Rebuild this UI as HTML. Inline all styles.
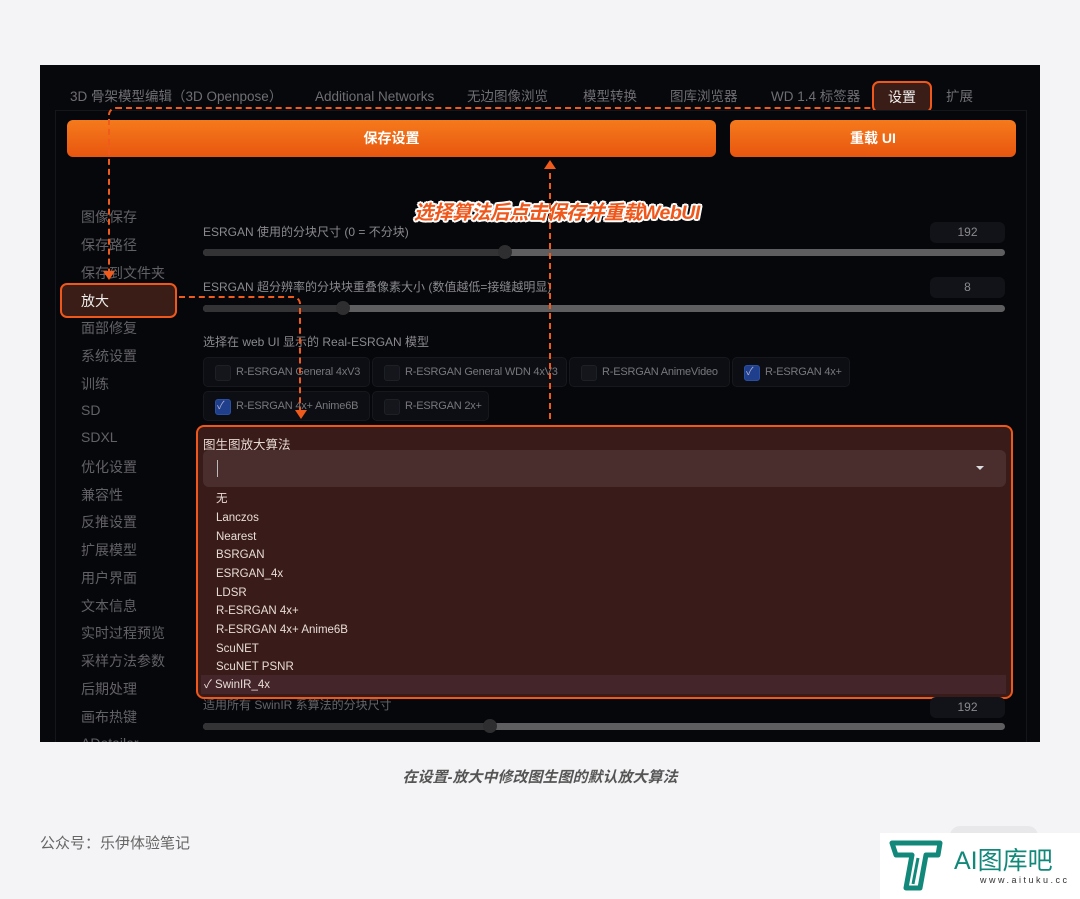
<!DOCTYPE html>
<html><head><meta charset="utf-8"><style>
*{margin:0;padding:0;box-sizing:border-box}
body{width:1080px;height:899px;background:#f4f4f6;position:relative;overflow:hidden;font-family:"Liberation Sans","Noto Sans CJK SC",sans-serif}
.a{position:absolute}
.shot{left:40px;top:65px;width:1000px;height:677px;background:#07080c;overflow:hidden}
.tab{position:absolute;top:24px;font-size:13.5px;line-height:16px;color:#6f6f73;white-space:nowrap}
.side{position:absolute;left:41px;font-size:14px;color:#626266}
.btn{position:absolute;top:55px;height:37px;border-radius:6px;background:linear-gradient(180deg,#f57a1c,#e8560f);color:#fff;font-weight:bold;font-size:14px;text-align:center;line-height:37px}
.lbl{position:absolute;left:163px;font-size:12px;color:#8a8a8e;white-space:nowrap}
.track{position:absolute;left:163px;width:802px;height:7px;border-radius:4px;background:#5e5e60}
.track i{position:absolute;left:0;top:0;height:7px;border-radius:4px;background:#333336}
.thumb{position:absolute;width:14px;height:14px;border-radius:50%;background:#2e2e30;top:-4px}
.num{position:absolute;left:890px;width:75px;height:21px;border-radius:6px;background:#111318;color:#8a8a8e;font-size:12px;text-align:center;line-height:21px}
.cb{position:absolute;height:30px;border:1px solid #16181e;background:#0c0e13;border-radius:5px;font-size:11px;letter-spacing:-0.2px;color:#77777c;line-height:28px;padding-left:32px;white-space:nowrap;overflow:hidden}
.cb:before{content:"";position:absolute;left:11px;top:7px;width:14px;height:14px;border-radius:3px;background:#14161c;border:1px solid #1e2027}
.cb.on:before{background:#1f3f8c;border-color:#2a4ea0}
.cb.on:after{content:"✓";position:absolute;left:13px;top:0;color:#aac;font-size:11px}
.opt{position:absolute;left:18px;font-size:11.5px;line-height:14px;color:#e8dcd6;white-space:nowrap}
.dash{position:absolute;border-color:#f05a1a;border-style:dashed;border-width:0}
</style></head><body>
<div class="a shot">
 <div class="tab" style="left:30px">3D 骨架模型编辑（3D Openpose）</div>
 <div class="tab" style="left:275px">Additional Networks</div>
 <div class="tab" style="left:427px">无边图像浏览</div>
 <div class="tab" style="left:543px">模型转换</div>
 <div class="tab" style="left:630px">图库浏览器</div>
 <div class="tab" style="left:731px">WD 1.4 标签器</div>
 <div class="a" style="left:832px;top:16px;width:60px;height:32px;border:2px solid #f0571b;border-radius:7px;background:#3a1d17;color:#eee;font-size:14px;text-align:center;line-height:28px">设置</div>
 <div class="tab" style="left:906px">扩展</div>
 <div class="a" style="left:15px;top:45px;width:972px;height:640px;border:1px solid #14161c;background:#06070b"></div>
 <div class="btn" style="left:27px;width:649px">保存设置</div>
 <div class="btn" style="left:690px;width:286px">重载 UI</div>
 <div class="a" style="left:374px;top:131px;font-size:19.5px;font-weight:bold;font-style:italic;color:#f0571b;text-shadow:2px 0 #fff,-2px 0 #fff,0 2px #fff,0 -2px #fff,1.5px 1.5px #fff,-1.5px -1.5px #fff,1.5px -1.5px #fff,-1.5px 1.5px #fff;white-space:nowrap;letter-spacing:-0.5px">选择算法后点击保存并重载WebUI</div>
 <div class="side" style="top:142px">图像保存</div>
 <div class="side" style="top:170px">保存路径</div>
 <div class="side" style="top:198px">保存到文件夹</div>
 <div class="a" style="left:20px;top:218px;width:117px;height:35px;border:2px solid #f0571b;border-radius:7px;background:#3a1d17;color:#eee;font-size:14px;padding:6px 0 0 19px">放大</div>
 <div class="side" style="top:253px">面部修复</div>
 <div class="side" style="top:281px">系统设置</div>
 <div class="side" style="top:309px">训练</div>
 <div class="side" style="top:337px">SD</div>
 <div class="side" style="top:364px">SDXL</div>
 <div class="side" style="top:392px">优化设置</div>
 <div class="side" style="top:420px">兼容性</div>
 <div class="side" style="top:447px">反推设置</div>
 <div class="side" style="top:475px">扩展模型</div>
 <div class="side" style="top:503px">用户界面</div>
 <div class="side" style="top:531px">文本信息</div>
 <div class="side" style="top:558px">实时过程预览</div>
 <div class="side" style="top:586px">采样方法参数</div>
 <div class="side" style="top:614px">后期处理</div>
 <div class="side" style="top:642px">画布热键</div>
 <div class="side" style="top:670px">ADetailer</div>
 <div class="lbl" style="top:158px">ESRGAN 使用的分块尺寸 (0 = 不分块)</div>
 <div class="num" style="top:157px">192</div>
 <div class="track" style="top:184px"><i style="width:302px"></i><div class="thumb" style="left:295px"></div></div>
 <div class="lbl" style="top:213px">ESRGAN 超分辨率的分块块重叠像素大小 (数值越低=接缝越明显)</div>
 <div class="num" style="top:212px">8</div>
 <div class="track" style="top:240px"><i style="width:140px"></i><div class="thumb" style="left:133px"></div></div>
 <div class="lbl" style="top:268px">选择在 web UI 显示的 Real-ESRGAN 模型</div>
 <div class="cb" style="left:163px;top:292px;width:167px">R-ESRGAN General 4xV3</div>
 <div class="cb" style="left:332px;top:292px;width:195px">R-ESRGAN General WDN 4xV3</div>
 <div class="cb" style="left:529px;top:292px;width:161px">R-ESRGAN AnimeVideo</div>
 <div class="cb on" style="left:692px;top:292px;width:118px">R-ESRGAN 4x+</div>
 <div class="cb on" style="left:163px;top:326px;width:167px">R-ESRGAN 4x+ Anime6B</div>
 <div class="cb" style="left:332px;top:326px;width:117px">R-ESRGAN 2x+</div>
 <div class="a" style="left:156px;top:360px;width:817px;height:274px;border:2px solid #f0571b;border-radius:8px;background:#391c1a">
  <div class="a" style="left:5px;top:7px;font-size:12.5px;color:#e6d8d2">图生图放大算法</div>
  <div class="a" style="left:5px;top:23px;width:803px;height:37px;border-radius:6px;background:#4a2e2e">
   <div class="a" style="left:14px;top:10px;width:1px;height:17px;background:#bbb"></div>
   <div class="a" style="right:22px;top:16px;border:4px solid transparent;border-top:4px solid #ddd"></div>
  </div>
  <div class="opt" style="top:65px">无</div>
  <div class="opt" style="top:84px">Lanczos</div>
  <div class="opt" style="top:103px">Nearest</div>
  <div class="opt" style="top:121px">BSRGAN</div>
  <div class="opt" style="top:140px">ESRGAN_4x</div>
  <div class="opt" style="top:159px">LDSR</div>
  <div class="opt" style="top:177px">R-ESRGAN 4x+</div>
  <div class="opt" style="top:196px">R-ESRGAN 4x+ Anime6B</div>
  <div class="opt" style="top:215px">ScuNET</div>
  <div class="opt" style="top:233px">ScuNET PSNR</div>
  <div class="a" style="left:3px;top:248px;width:805px;height:19px;background:#44262a"></div>
  <div class="opt" style="top:251px;left:6px">✓ SwinIR_4x</div>
 </div>
 <div class="lbl" style="top:631px;color:#66666a">适用所有 SwinIR 系算法的分块尺寸</div>
 <div class="num" style="top:632px">192</div>
 <div class="track" style="top:658px"><i style="width:287px"></i><div class="thumb" style="left:280px"></div></div>
 <div class="dash" style="left:68px;top:42px;width:764px;height:168px;border-top-width:2px;border-left-width:2px;border-top-left-radius:8px"></div>
 <div class="a" style="left:63px;top:206px;border:6px solid transparent;border-top:9px solid #f05a1a"></div>
 <div class="dash" style="left:139px;top:231px;width:122px;height:115px;border-top-width:2px;border-right-width:2px;border-top-right-radius:8px"></div>
 <div class="a" style="left:255px;top:345px;border:6px solid transparent;border-top:9px solid #f05a1a"></div>
 <div class="dash" style="left:509px;top:108px;height:246px;border-left-width:2px"></div>
 <div class="a" style="left:504px;top:95px;border:6px solid transparent;border-bottom:9px solid #f05a1a;border-top:0"></div>
</div>
<div class="a" style="left:0;top:766px;width:1080px;text-align:center;font-size:15px;font-weight:bold;font-style:italic;color:#555">在设置-放大中修改图生图的默认放大算法</div>
<div class="a" style="left:40px;top:832px;font-size:15px;color:#666">公众号：乐伊体验笔记</div>
<div class="a" style="left:950px;top:826px;width:88px;height:20px;border-radius:10px;background:#e8e8ea"></div>
<div class="a" style="left:880px;top:833px;width:200px;height:66px;background:#fff">
 <svg class="a" style="left:8px;top:7px" width="56" height="52" viewBox="0 0 56 52"><path d="M4 3H52L50 15H38L32 48H18L24 15H8Z" fill="none" stroke="#12887a" stroke-width="5" stroke-linejoin="round"/><path d="M30 18L25 44" stroke="#12887a" stroke-width="3"/></svg>
 <div class="a" style="left:74px;top:8px;font-size:25px;color:#12887a;white-space:nowrap">AI图库吧</div>
 <div class="a" style="left:100px;top:42px;font-size:9px;letter-spacing:2.5px;color:#333;white-space:nowrap">www.aituku.cc</div>
</div>
</body></html>
